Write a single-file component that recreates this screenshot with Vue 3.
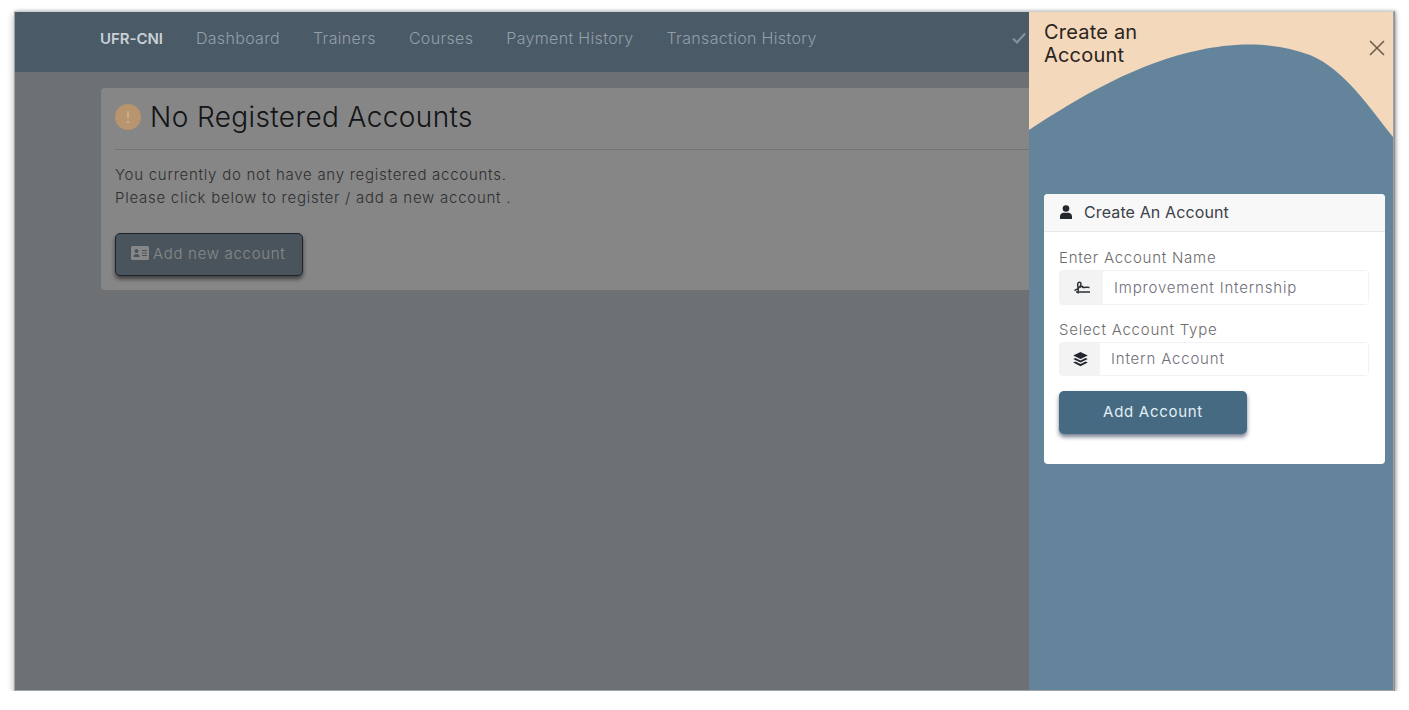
<script setup>
const links = ['Dashboard', 'Trainers', 'Courses', 'Payment History', 'Transaction History']
</script>

<template>
  <div class="window">
    <header class="nav">
      <a class="brand">UFR-CNI</a>
      <a v-for="l in links" :key="l" class="link">{{ l }}</a>
      <svg class="check" viewBox="0 0 16 16"><path d="M2 8.500l4 4 8-9" fill="none" stroke="currentColor" stroke-width="2.200"/></svg>
    </header>
    <main class="content">
      <section class="panel">
        <h1 class="title">
          <svg class="warn" viewBox="0 0 26 26"><circle cx="13" cy="13" r="13" fill="#b8946f"/><rect x="12" y="7" width="2" height="7.500" rx="1" fill="#c9ad90"/><circle cx="13" cy="18" r="1.300" fill="#c9ad90"/></svg>
          No Registered Accounts
        </h1>
        <hr class="rule" />
        <p class="copy">You currently do not have any registered accounts.<br />Please click below to register / add a new account .</p>
        <button class="add-new">
          <svg class="card-icon" viewBox="0 0 18 14"><path fill="currentColor" fill-rule="evenodd" d="M1.500 0h15A1.500 1.500 0 0 1 18 1.500v11a1.500 1.500 0 0 1-1.500 1.500h-15A1.500 1.500 0 0 1 0 12.500v-11A1.500 1.500 0 0 1 1.500 0zM5.500 3a2 2 0 1 0 0 4 2 2 0 0 0 0-4zM2.500 10.500c0-1.500 1.300-2.500 3-2.500s3 1 3 2.500v.5h-6zM11 4h5v1h-5zM11 6.500h5v1h-5zM11 9h5v1h-5z"/></svg>
          Add new account
        </button>
      </section>
    </main>
    <div class="backdrop"></div>
    <aside class="drawer">
      <svg class="wave" viewBox="0 0 364 130" preserveAspectRatio="none"><path fill="#64849c" d="M0 118C50 85 110 50 171 38C200 32 240 28 281 43C315 57 340 95 364 125L364 130L0 130Z"/></svg>
      <div class="drawer-head">
        <h2 class="drawer-title">Create an<br />Account</h2>
        <svg class="close" viewBox="0 0 16 16"><path d="M1 1l14 14M15 1L1 15" stroke="#6b5a4a" stroke-width="1.500" fill="none"/></svg>
      </div>
      <div class="form-card">
        <div class="form-head">
          <svg class="user" viewBox="0 0 14 14"><circle cx="7" cy="3.500" r="3.300" fill="#22282e"/><path fill="#22282e" d="M1 14v-2.500C1 9 3 7.800 4.500 7.800h5C11 7.800 13 9 13 11.500V14z"/></svg>
          <span>Create An Account</span>
        </div>
        <div class="form-body">
          <label class="label">Enter Account Name</label>
          <div class="group">
            <span class="addon wide">
              <svg class="sig" viewBox="0 0 18 14"><path d="M1.500 9.500C4.500 8.500 8 5.500 8 3 8 .8 5 .8 4.700 3 4.400 5.500 6 8 5 12.500M7 6.500C9 4.500 10 5 9.800 6.500 10.500 7 12 5.500 16.500 6.500M3 11H17" fill="none" stroke="#2c3136" stroke-width="1.500"/></svg>
            </span>
            <input class="field" value="Improvement Internship" readonly />
          </div>
          <label class="label second">Select Account Type</label>
          <div class="group short">
            <span class="addon">
              <svg class="layers" viewBox="0 0 14 14"><path fill="#22282e" d="M7 0l6.800 3.300L7 6.600.2 3.300zM2.300 5.600L7 7.900l4.700-2.300 2.100 1L7 9.900.2 6.600zM2.300 8.900L7 11.200l4.700-2.300 2.100 1L7 13.200.2 9.900z"/></svg>
            </span>
            <select class="field select"><option>Intern Account</option></select>
          </div>
          <button class="submit">Add Account</button>
        </div>
      </div>
    </aside>
  </div>
</template>

<style>
html, body { margin: 0; background: #fff; }
</style>

<style scoped>
.window {
  position: relative;
  box-sizing: border-box;
  width: 1380px;
  height: 680px;
  margin: 11px 0 0 14px;
  border: 1px solid #a0a2a4;
  border-top-color: #cfd0d1;
  box-shadow: 1px 0 0 #8f9193, 0 3px 7px rgba(0,0,0,.32), 2px 0 3px rgba(0,0,0,.25);
  background: #d0d6dc;
  overflow: hidden;
  font-family: Inter, "Open Sans", sans-serif;
  font-weight: 300;
  display: flex;
  flex-direction: column;
}
.nav {
  position: relative;
  z-index: 1;
  height: 60px;
  box-sizing: border-box;
  padding: 0 0 8px 85px;
  flex: none;
  background: #4b5a67;
  display: flex;
  align-items: center;
  gap: 33px;
  color: #939fa8;
  font-size: 16px;
}
.brand { color: #c9d0d6; font-weight: 600; font-size: 15px; letter-spacing: -.05px; }
.link { letter-spacing: .33px; }
.check { width: 16px; height: 16px; color: #84929d; position: absolute; left: 996px; top: 18px; }
.content { flex: 1; padding: 16px 0 0 86px; }
.panel {
  box-sizing: border-box;
  width: 1200px;
  height: 202px;
  background: #fdfdfd;
  border-radius: 4px;
  padding: 12px 15px 12px 14px;
}
.title {
  margin: 0;
  display: flex;
  align-items: center;
  gap: 9px;
  font-size: 28px;
  font-weight: 300;
  letter-spacing: .39px;
  color: #24282c;
  height: 34px;
}
.warn { position: relative; z-index: 1; width: 26px; height: 26px; }
.rule { border: 0; border-top: 1px solid #dcdcdc; margin: 15px 0 13px; }
.copy {
  margin: 0;
  font-size: 15px;
  line-height: 23px;
  letter-spacing: .74px;
  color: #565b60;
}
.add-new {
  margin-top: 24px;
  box-sizing: border-box;
  display: flex;
  align-items: center;
  gap: 4px;
  width: 188px;
  height: 43px;
  padding: 0 15px 3px;
  background: #8a9fb0;
  border: 1px solid #3a4550;
  border-radius: 5px;
  box-shadow: 0 3px 4px rgba(0,0,0,.55);
  color: #fff;
  font: inherit;
  font-size: 15px;
  letter-spacing: .7px;
}
.card-icon { width: 18px; height: 14px; }
.backdrop { position: absolute; inset: 0; background: rgba(0,0,0,.47); }
.drawer {
  position: absolute;
  z-index: 2;
  top: 0; right: 0; bottom: 0;
  width: 364px;
  background: linear-gradient(#f3d8bc 0 128px, #64849c 128px);
  display: flex;
  flex-direction: column;
}
.wave { position: absolute; left: 0; top: 0; width: 100%; height: 130px; }
.drawer-head { position: relative; height: 182px; flex: none; padding: 9px 15px 0; box-sizing: border-box; }
.drawer-title { margin: 0; font-size: 20px; line-height: 23px; font-weight: 400; color: #2a2420; letter-spacing: .2px; }
.close { position: absolute; right: 8px; top: 28px; width: 16px; height: 16px; }
.form-card {
  position: relative;
  box-sizing: border-box;
  margin-left: 15px;
  width: 341px;
  height: 270px;
  background: #fff;
  border-radius: 4px;
  overflow: hidden;
}
.form-head {
  height: 38px;
  box-sizing: border-box;
  background: #f8f8f8;
  border-bottom: 1px solid #e8e8e8;
  display: flex;
  align-items: center;
  gap: 11px;
  padding: 0 0 2px 15px;
  font-size: 16px;
  font-weight: 400;
  letter-spacing: .12px;
  color: #3c4147;
}
.user { width: 14px; height: 14px; }
.form-body { padding: 16px 15px 0; }
.label { display: block; font-size: 15px; line-height: 20px; letter-spacing: .75px; color: #6c6c6c; }
.label.second { margin-top: 15px; }
.group {
  display: flex;
  height: 35px;
  margin-top: 2px;
  width: 310px;
  border: 1px solid #f2f2f2;
  box-sizing: border-box;
  border-radius: 4px;
}
.group.short { height: 34px; }
.addon {
  flex: none;
  width: 40px;
  background: #f3f3f3;
  display: flex;
  align-items: center;
  justify-content: center;
}
.addon.wide { width: 43px; }
.sig { width: 18px; height: 14px; }
.layers { width: 15px; height: 15px; }
.field {
  flex: 1;
  min-width: 0;
  border: 0;
  outline: 0;
  background: #fff;
  padding: 0 0 0 11px;
  font: inherit;
  font-size: 15px;
  letter-spacing: .82px;
  color: #6e6e7a;
}
.select { appearance: none; padding-bottom: 2px; }
.submit {
  display: block;
  margin-top: 15px;
  width: 188px;
  height: 43px;
  padding: 0 0 2px;
  background: #456a82;
  border: 0;
  border-radius: 5px;
  box-shadow: 0 3px 4px rgba(30,40,70,.6);
  color: #e2edf4;
  font: inherit;
  font-weight: 400;
  font-size: 15px;
  letter-spacing: .7px;
}
</style>
